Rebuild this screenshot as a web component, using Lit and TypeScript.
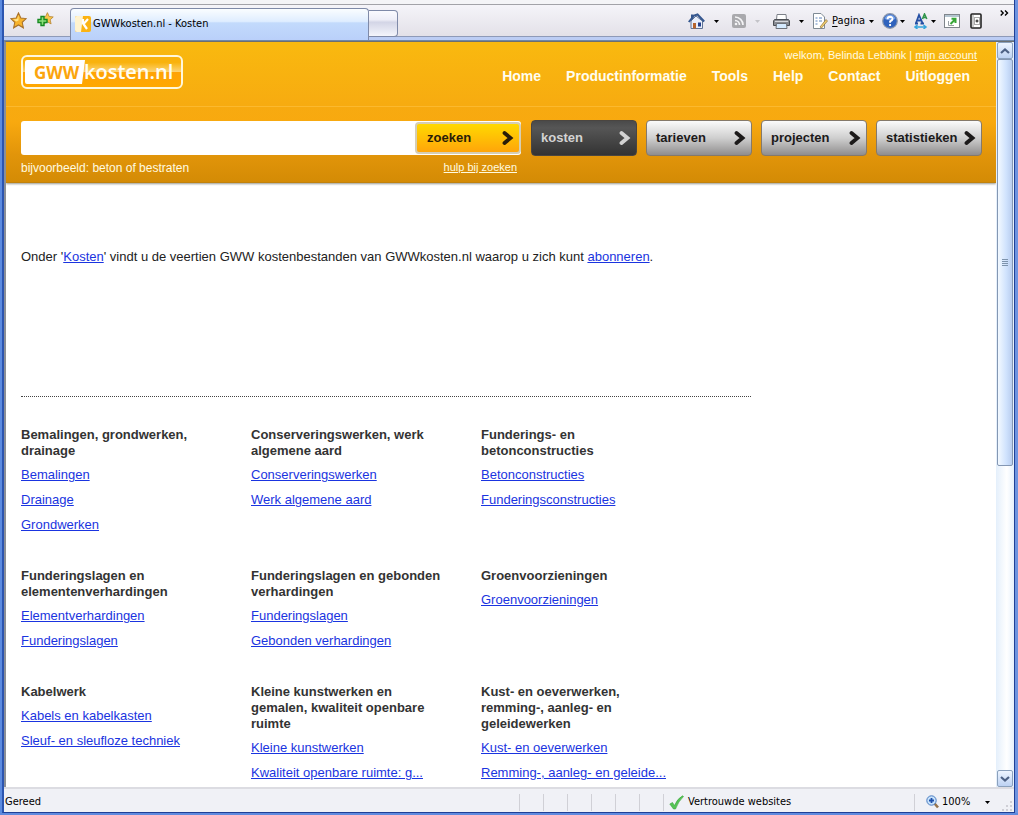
import { LitElement, html, css } from "lit";
import { customElement } from "lit/decorators.js";

interface Category {
  title: string;
  links: string[];
}

const NAV = ["Home", "Productinformatie", "Tools", "Help", "Contact", "Uitloggen"];
const TABS = ["kosten", "tarieven", "projecten", "statistieken"];
const CATEGORIES: Category[] = [
  { title: "Bemalingen, grondwerken, drainage", links: ["Bemalingen", "Drainage", "Grondwerken"] },
  { title: "Conserveringswerken, werk algemene aard", links: ["Conserveringswerken", "Werk algemene aard"] },
  { title: "Funderings- en betonconstructies", links: ["Betonconstructies", "Funderingsconstructies"] },
  { title: "Funderingslagen en elementenverhardingen", links: ["Elementverhardingen", "Funderingslagen"] },
  { title: "Funderingslagen en gebonden verhardingen", links: ["Funderingslagen", "Gebonden verhardingen"] },
  { title: "Groenvoorzieningen", links: ["Groenvoorzieningen"] },
  { title: "Kabelwerk", links: ["Kabels en kabelkasten", "Sleuf- en sleufloze techniek"] },
  { title: "Kleine kunstwerken en gemalen, kwaliteit openbare ruimte", links: ["Kleine kunstwerken", "Kwaliteit openbare ruimte: g..."] },
  { title: "Kust- en oeverwerken, remming-, aanleg- en geleidewerken", links: ["Kust- en oeverwerken", "Remming-, aanleg- en geleide..."] },
];

const chevron = html`<svg width="12" height="16" viewBox="0 0 12 16" aria-hidden="true">
  <path d="M2.500 3 L8.500 8 L2.500 13" fill="none" stroke="currentColor" stroke-width="3.800" stroke-linecap="round" stroke-linejoin="miter" />
</svg>`;

const starPath = "M8 .8 L10.2 5.6 L15.3 6.2 L11.5 9.7 L12.6 14.9 L8 12.2 L3.4 14.9 L4.5 9.7 L.7 6.2 L5.8 5.6 Z";

const caret = html`<svg width="5" height="3" viewBox="0 0 5 3" aria-hidden="true"><path d="M0 0 H5 L2.5 3 Z" fill="currentColor" /></svg>`;

@customElement("browser-toolbar")
export class BrowserToolbar extends LitElement {
  static styles = css`
    :host { display: block; flex: none; height: 41px; color: #000; font: 11px/14px "DejaVu Sans Condensed", "Noto Sans", sans-serif;
      background: linear-gradient(#f4f4f7 0 4px, #a2a2a8 4px 5px, #f5f4f9 5px, #e3e1e8 36px, #8e9ab8 36px 37px, #bccdf4 37px 40px, #7088a8 40px); }
    .bar { display: flex; height: 41px; padding: 0 5px 0 0; align-items: stretch; }
    button { display: flex; align-items: center; border: 0; background: none; padding: 0; margin: 0; font: inherit; color: inherit; gap: 6px; }
    svg { display: block; flex: none; }
    .favorites { display: flex; gap: 10px; padding: 0 0 0 6px; width: 60px; }
    .favorites button { padding-bottom: 1px; }
    .tab { width: 299px; height: 32px; margin-top: 8px; padding: 0 4px 2px; gap: 2px; border: 1px solid #7f8aa8; border-bottom: 0; border-radius: 4px 4px 0 0;
      background: linear-gradient(#fafdff, #dfedff 40%, #c2dafc 45%, #bad0fa); }
    .newtab { width: 29px; height: 27px; margin-top: 10px; border: 1px solid #7f8aa8; border-left: 0; border-radius: 0 4px 4px 0;
      background: linear-gradient(#fbfbff, #eeeef7 35%, #d3d5e6 45%, #f4f5fb); }
    .tools { display: flex; margin-left: auto; }
    .tools button { padding-top: 1px; }
    .home { margin-right: 13px; }
    .feed { margin-right: 13px; color: #c3c3c8; }
    .feed, .print, .home { gap: 9px; }
    .print { margin-right: 8px; }
    .page { margin-right: 8px; gap: 4px; }
    .page u { text-underline-offset: 2px; }
    .help { margin-right: 9px; gap: 2px; }
    .text { margin-right: 8px; gap: 3px; }
    .popout { margin-right: 10px; }
    .research { margin-right: 18px; }
    .tools .more { align-items: flex-start; padding-top: 10px; }
  `;
  render() {
    return html`<div class="bar">
      <div class="favorites">
        <button aria-label="Favorieten">
          <svg width="17" height="17" viewBox="0 0 16 16"><path d=${starPath} fill="#f8b32c" stroke="#a8712a" /><path d="M8 3 L6.8 6.600 L3 7 L6 9 L8 8 Z" fill="#ffe58a" /></svg>
        </button>
        <button aria-label="Toevoegen">
          <svg width="17" height="16" viewBox="0 0 17 16"><g transform="translate(4 0) scale(.8)"><path d=${starPath} fill="#f8c54a" stroke="#b68432" /></g>
            <path d="M4 4.500 h3 v3 h3 v3 h-3 v3 h-3 v-3 h-3 v-3 h3 z" fill="#8fe07c" stroke="#168a22" stroke-width="1.400" /></svg>
        </button>
      </div>
      <button class="tab">
        <svg width="16" height="16" viewBox="0 0 16 16"><rect width="16" height="16" rx="2" fill="#fbb313" /><path d="M0 2 Q0 0 2 0 H8 L6 16 H2 Q0 16 0 14 Z" fill="#fff3cf" /><path d="M8 3 V8 M13 3 L8.500 8 L12 13" fill="none" stroke="#fff" stroke-width="2.200" /></svg>
        <span>GWWkosten.nl - Kosten</span>
      </button>
      <button class="newtab" aria-label="Nieuw tabblad"></button>
      <div class="tools">
        <button class="home" aria-label="Startpagina">
          <svg width="17" height="17" viewBox="0 0 17 17"><path d="M3 1.500 h2.500 v5 h-2.500 z" fill="#35578f" /><path d="M3 8 L8 3 L14.500 8 V15.500 H3 Z" fill="#e8eefb" stroke="#5f7396" /><path d="M.8 9 L6 2.500 L9.500 1.500 L16.200 8.500" fill="none" stroke="#35578f" stroke-width="2" /><path d="M5 10 h3 v5.500 h-3 z" fill="#b5642e" /><path d="M10 9.500 h3 v4 h-3 z" fill="#23408c" /></svg>${caret}
        </button>
        <button class="feed" aria-label="Feeds">
          <svg width="14" height="14" viewBox="0 0 14 14"><rect width="14" height="14" rx="2" fill="#a9a9ad" /><g fill="none" stroke="#f4f4f6" stroke-width="1.700"><path d="M3 6.500 A4.500 4.500 0 0 1 7.500 11" /><path d="M3 3 A8 8 0 0 1 11 11" /></g><circle cx="4" cy="10" r="1.300" fill="#f4f4f6" /></svg>${caret}
        </button>
        <button class="print" aria-label="Afdrukken">
          <svg width="17" height="15" viewBox="0 0 17 15"><path d="M4 .5 H13 L13.500 6 H3.500 Z" fill="#fff" stroke="#7c8088" /><path d="M1.500 5.500 H15.500 L16.500 7 V11.500 H.5 V7 Z" fill="#888b92" stroke="#4b4e54" /><path d="M2 7.500 H15" stroke="#d5d7dc" /><path d="M3.500 9.500 H13.500 L14 14.500 H3 Z" fill="#d5eaff" stroke="#6c7078" /></svg>${caret}
        </button>
        <button class="page">
          <svg width="16" height="16" viewBox="0 0 16 16"><path d="M1.500 .5 H9 L12.500 4 V15.500 H1.500 Z" fill="#fff" stroke="#7f8a94" /><path d="M3.500 5 h2 M3.500 8 h2 M3.500 11 h2 M7 5 h3 M7 8 h3" stroke="#5c82bc" /><path d="M8 14 L14 6.500 L15.500 8 L9.500 15 Z" fill="#f0ce70" stroke="#8d6f36" stroke-width=".7" /></svg>
          <span><u>P</u>agina</span>${caret}
        </button>
        <button class="help" aria-label="Help">
          <svg width="16" height="16" viewBox="0 0 16 16"><circle cx="8" cy="8" r="7.300" fill="#2f62bd" stroke="#8b97ac" stroke-width="1.200" /><path d="M2.500 6 A5.700 5.700 0 0 1 13.500 6 Q8 8 2.500 6" fill="#6f9ce6" /><path d="M5.500 6.200 Q5.600 3.700 8 3.700 Q10.600 3.800 10.500 6 Q10.300 7.400 8.100 8.400 V9.700 M8.100 11 V13" fill="none" stroke="#fff" stroke-width="1.900" /></svg>${caret}
        </button>
        <button class="text" aria-label="Tekengrootte">
          <svg width="14" height="16" viewBox="0 0 14 16"><path d="M1 10.500 H4 M6.500 10.500 H10 M2 10 L5 2 L8.500 10 M3.500 7.500 H7" fill="none" stroke="#244fa4" stroke-width="1.800" /><path d="M8.500 6 L10.500 1 L12.800 6 M9.500 4.500 H12" fill="none" stroke="#31954b" stroke-width="1.600" /><path d="M1.500 14 H11.500 M3.500 12 L1 14 L3.500 16 M9.500 12 L12 14 L9.500 16" fill="none" stroke="#35a5dc" stroke-width="1.500" /></svg>${caret}
        </button>
        <button class="popout" aria-label="Venster">
          <svg width="16" height="14" viewBox="0 0 16 14"><rect x=".5" y=".5" width="15" height="13" fill="#fff" stroke="#7f858b" /><path d="M1 2 H15" stroke="#b4c4d0" stroke-width="2" /><path d="M4.500 7 V11.500 H10" fill="none" stroke="#9aa0a6" /><path d="M6.500 10 L11 5.500 M7.500 4.800 H11.500 V9" fill="none" stroke="#37a637" stroke-width="2" /></svg>
        </button>
        <button class="research" aria-label="Onderzoek">
          <svg width="12" height="16" viewBox="0 0 12 16"><rect x="1" y="1" width="10" height="14" rx="1" fill="#fff" stroke="#222" stroke-width="1.600" /><path d="M3 2 V14" stroke="#999" /><rect x="4.500" y="4.500" width="5" height="7" fill="none" stroke="#aaa" /><path d="M5.500 8 H8.500 M7 6.500 V9.500" stroke="#111" /></svg>
        </button>
        <button class="more" aria-label="Meer">
          <svg width="9" height="6" viewBox="0 0 9 6"><path d="M.7 .5 L3.200 3 L.7 5.500 M5 .5 L7.500 3 L5 5.500" fill="none" stroke="#000" stroke-width="1.400" /></svg>
        </button>
      </div>
    </div>`;
  }
}

@customElement("site-header")
export class SiteHeader extends LitElement {
  static styles = css`
    :host { display: block; height: 141px; box-sizing: border-box; border-bottom: 1px solid #c1820c; box-shadow: 0 1px 2px #99998f; color: #fffbe0;
      font-family: "Liberation Sans", Arial, sans-serif;
      background: linear-gradient(#f9b90f, #f7ab10 64px, #fcb92e 64px 65px, #f7aa10 65px, #f8a90f 80px, #e2950a 112px, #d48b05); }
    .top { display: flex; justify-content: space-between; height: 78px; box-sizing: border-box; padding: 12px 19px 0 15px; }
    .logo { display: block; }
    .right { display: flex; flex-direction: column; align-items: flex-end; }
    .welcome { font-size: 11px; line-height: 14px; margin-top: -6px; }
    a { color: inherit; }
    nav { display: flex; gap: 25px; margin: 6px 7px 0 0; font-size: 14px; font-weight: bold; line-height: 16px; }
    nav a { text-decoration: none; color: #fffdf0; }
    .row { display: flex; gap: 9px; padding: 0 14px 0 15px; }
    form { flex: 1; display: flex; min-width: 0; height: 34px; margin: 0 1px 0 0; background: #fff; border-radius: 3px; align-self: center; }
    input { flex: 1; min-width: 0; border: 0; background: none; outline: 0; padding: 0 8px; font: 13px "Liberation Sans", sans-serif; }
    button { display: flex; align-items: center; justify-content: space-between; box-sizing: border-box; width: 106px; height: 36px; margin: 0; padding: 0 5px 0 9px;
      border: 1px solid #85796a; border-radius: 4px; font: bold 13px/16px "Liberation Sans", Arial, sans-serif; color: #1c1a1a; background: linear-gradient(#fbfbfb, #cfcfcf 50%, #8f8d8d); }
    .active { color: #d3d3d3; border-color: #4a4540; background: linear-gradient(#4a4a4a, #565656 20%, #333); }
    .search { height: 32px; margin: 1px 0; padding: 0 5px 0 10px; border: 2px solid #d6ceb4; color: #2a1d08; background: linear-gradient(#ffd900, #ffa50a); }
    .hints { display: flex; justify-content: space-between; width: 496px; margin-left: 15px; padding-top: 4px; font-size: 12px; line-height: 16px; }
    .hints a { font-size: 11px; line-height: 14px; }
    svg { flex: none; }
  `;
  render() {
    return html`<div class="top">
        <svg class="logo" width="163" height="36" viewBox="0 0 163 36" role="img" aria-label="GWWkosten.nl">
          <defs><linearGradient id="g" x1="0" y1="0" x2="0" y2="1"><stop offset="0" stop-color="#f9b20d" /><stop offset=".2" stop-color="#f9b20d" /><stop offset=".49" stop-color="#fcd372" /><stop offset=".5" stop-color="#ffa305" /><stop offset="1" stop-color="#ffa800" /></linearGradient></defs>
          <rect x="1" y="2" width="160" height="32" rx="5" fill="url(#g)" stroke="#fff7dc" stroke-width="2" />
          <path d="M6 6 H64 L61 30 H6 Q4 30 4 28 V8 Q4 6 6 6 Z" fill="#fff" />
          <text x="13" y="25" font-family="Open Sans, sans-serif" font-weight="bold" font-size="17" fill="#fba50d">GWW</text>
          <text x="63" y="25" font-family="Open Sans, sans-serif" font-weight="600" font-size="20" fill="#fffdf4">kosten.nl</text>
        </svg>
        <div class="right">
          <div class="welcome">welkom, Belinda Lebbink | <a href="#account">mijn account</a></div>
          <nav>${NAV.map((n) => html`<a href="#${n.toLowerCase()}">${n}</a>`)}</nav>
        </div>
      </div>
      <div class="row">
        <form @submit=${(e: Event) => e.preventDefault()}>
          <input type="text" aria-label="Zoekterm" />
          <button class="search">zoeken ${chevron}</button>
        </form>
        ${TABS.map((t, i) => html`<button class=${i === 0 ? "active" : ""}>${t} ${chevron}</button>`)}
      </div>
      <div class="hints"><span>bijvoorbeeld: beton of bestraten</span><a href="#hulp">hulp bij zoeken</a></div>`;
  }
}

@customElement("scroll-rail")
export class ScrollRail extends LitElement {
  static styles = css`
    :host { display: flex; flex-direction: column; flex: none; width: 18px; box-sizing: border-box; padding: 0 1px; background: linear-gradient(90deg, #e4effb, #fff 60%, #e6f0fc); }
    button { display: grid; place-items: center; width: 16px; height: 17px; margin: 0; padding: 0; border: 1px solid #8ba1bd; border-radius: 2px; background: linear-gradient(#eef5ff, #bdd2f3); }
    .thumb { flex: 406; box-sizing: border-box; border: 1px solid #8497b3; border-radius: 2px; display: grid; place-items: center; background: linear-gradient(90deg, #f3f9ff, #cfe2fd 60%, #b9cdef); }
    .rest { flex: 304; }
  `;
  render() {
    return html`<button aria-label="Omhoog"><svg width="10" height="6" viewBox="0 0 10 6"><path d="M1 5 L5 1.500 L9 5" fill="none" stroke="#4d6185" stroke-width="2.200" /></svg></button>
      <div class="thumb"><svg width="6" height="8" viewBox="0 0 6 8"><path d="M0 .5 H6 M0 2.500 H6 M0 4.500 H6 M0 6.500 H6" stroke="#7d93ad" /></svg></div>
      <div class="rest"></div>
      <button aria-label="Omlaag"><svg width="10" height="6" viewBox="0 0 10 6"><path d="M1 1 L5 4.500 L9 1" fill="none" stroke="#4d6185" stroke-width="2.200" /></svg></button>`;
  }
}

@customElement("status-bar")
export class StatusBar extends LitElement {
  static styles = css`
    :host { display: flex; flex: none; height: 25px; box-sizing: border-box; border-top: 2px solid #dcdce2; background: #f0f1f6; align-items: center; padding-top: 3px; color: #000;
      font: 11px/14px "DejaVu Sans Condensed", "Noto Sans", sans-serif; }
    .state { flex: 1; padding-left: 1px; }
    .cell { width: 23px; height: 17px; border-left: 1px solid #d0d0d6; }
    .zone { display: flex; align-items: center; gap: 4px; width: 251px; height: 17px; border-left: 1px solid #d0d0d6; padding-left: 5px; box-sizing: border-box; }
    .zoom { display: flex; align-items: center; gap: 3px; height: 17px; padding: 0 0 0 11px; border: 0; border-left: 1px solid #d0d0d6; background: none; font: inherit; color: inherit; width: 88px; box-sizing: border-box; }
    .zoom span { margin-right: 12px; }
    .grip { align-self: flex-end; width: 12px; height: 12px; }
  `;
  render() {
    return html`<span class="state">Gereed</span>
      ${[0, 1, 2, 3, 4, 5].map(() => html`<span class="cell"></span>`)}
      <div class="zone"><svg width="15" height="15" viewBox="0 0 15 15"><path d="M.8 9 L3.500 7.500 L5.500 10.500 Q8 4 13.500 .8 L14.500 1.500 Q9.500 6 6.500 14 H4.500 Z" fill="#55c455" stroke="#3aa53a" stroke-width=".6" /></svg><span>Vertrouwde websites</span></div>
      <button class="zoom"><svg width="13" height="14" viewBox="0 0 13 14"><path d="M8.500 8.500 L12 12.500" stroke="#96734a" stroke-width="2.600" /><circle cx="5.500" cy="5.500" r="4.700" fill="#c7e2fb" stroke="#4a7cc0" /><path d="M3 5.500 H8 M5.500 3 V8" stroke="#1e50aa" stroke-width="1.800" /></svg><span>100%</span>${caret}</button>
      <svg class="grip" viewBox="0 0 12 12" aria-hidden="true"><path d="M8 1 h2 v2 h-2 z M8 5 h2 v2 h-2 z M8 9 h2 v2 h-2 z M4 5 h2 v2 h-2 z M4 9 h2 v2 h-2 z M0 9 h2 v2 h-2 z" fill="#cfcfd6" /></svg>`;
  }
}

@customElement("app-root")
export class AppRoot extends LitElement {
  static styles = css`
    :host { display: flex; flex-direction: column; box-sizing: border-box; height: 100vh; overflow: hidden; border: solid #5f8ade; border-width: 0 0 2px; background: #fff; }
    .window { flex: 1; display: flex; flex-direction: column; min-height: 0; border-left: 2px solid #5c8be0; border-right: 3px solid #6d93e0; }
    .inner { flex: 1; display: flex; flex-direction: column; min-height: 0; border-left: 2px solid #2c55b0; border-right: 1px solid #1f3f96; border-bottom: 1px solid #1f3f96; }
    .viewport { flex: 1; display: flex; min-height: 0; border-left: 2px solid #8a8f98; border-top: 1px solid #6c6f70; }
    .page { flex: 1; min-width: 0; overflow: hidden; font: 13px/16px "Liberation Sans", Arial, sans-serif; color: #222; }
    .content { padding: 66px 15px 0; }
    a { color: #1a34e0; }
    p { margin: 0; }
    .rule { max-width: 730px; height: 0; margin-top: 131px; border-top: 1px dotted #444; }
    .grid { display: grid; grid-template-columns: repeat(3, 200px); gap: 31px 30px; margin-top: 30px; }
    h2 { margin: 0 0 3px; font-size: 13px; line-height: 16px; color: #333; }
    ul { list-style: none; margin: 0; padding: 0; line-height: 25px; white-space: nowrap; }
  `;
  render() {
    return html`<div class="window"><div class="inner">
      <browser-toolbar></browser-toolbar>
      <div class="viewport">
        <div class="page">
          <site-header></site-header>
          <main class="content">
            <p>Onder '<a href="#kosten">Kosten</a>' vindt u de veertien GWW kostenbestanden van GWWkosten.nl waarop u zich kunt <a href="#abonneren">abonneren</a>.</p>
            <div class="rule"></div>
            <div class="grid">
              ${CATEGORIES.map((c) => html`<section><h2>${c.title}</h2><ul>${c.links.map((l) => html`<li><a href="#">${l}</a></li>`)}</ul></section>`)}
            </div>
          </main>
        </div>
        <scroll-rail></scroll-rail>
      </div>
      <status-bar></status-bar>
    </div></div>`;
  }
}
